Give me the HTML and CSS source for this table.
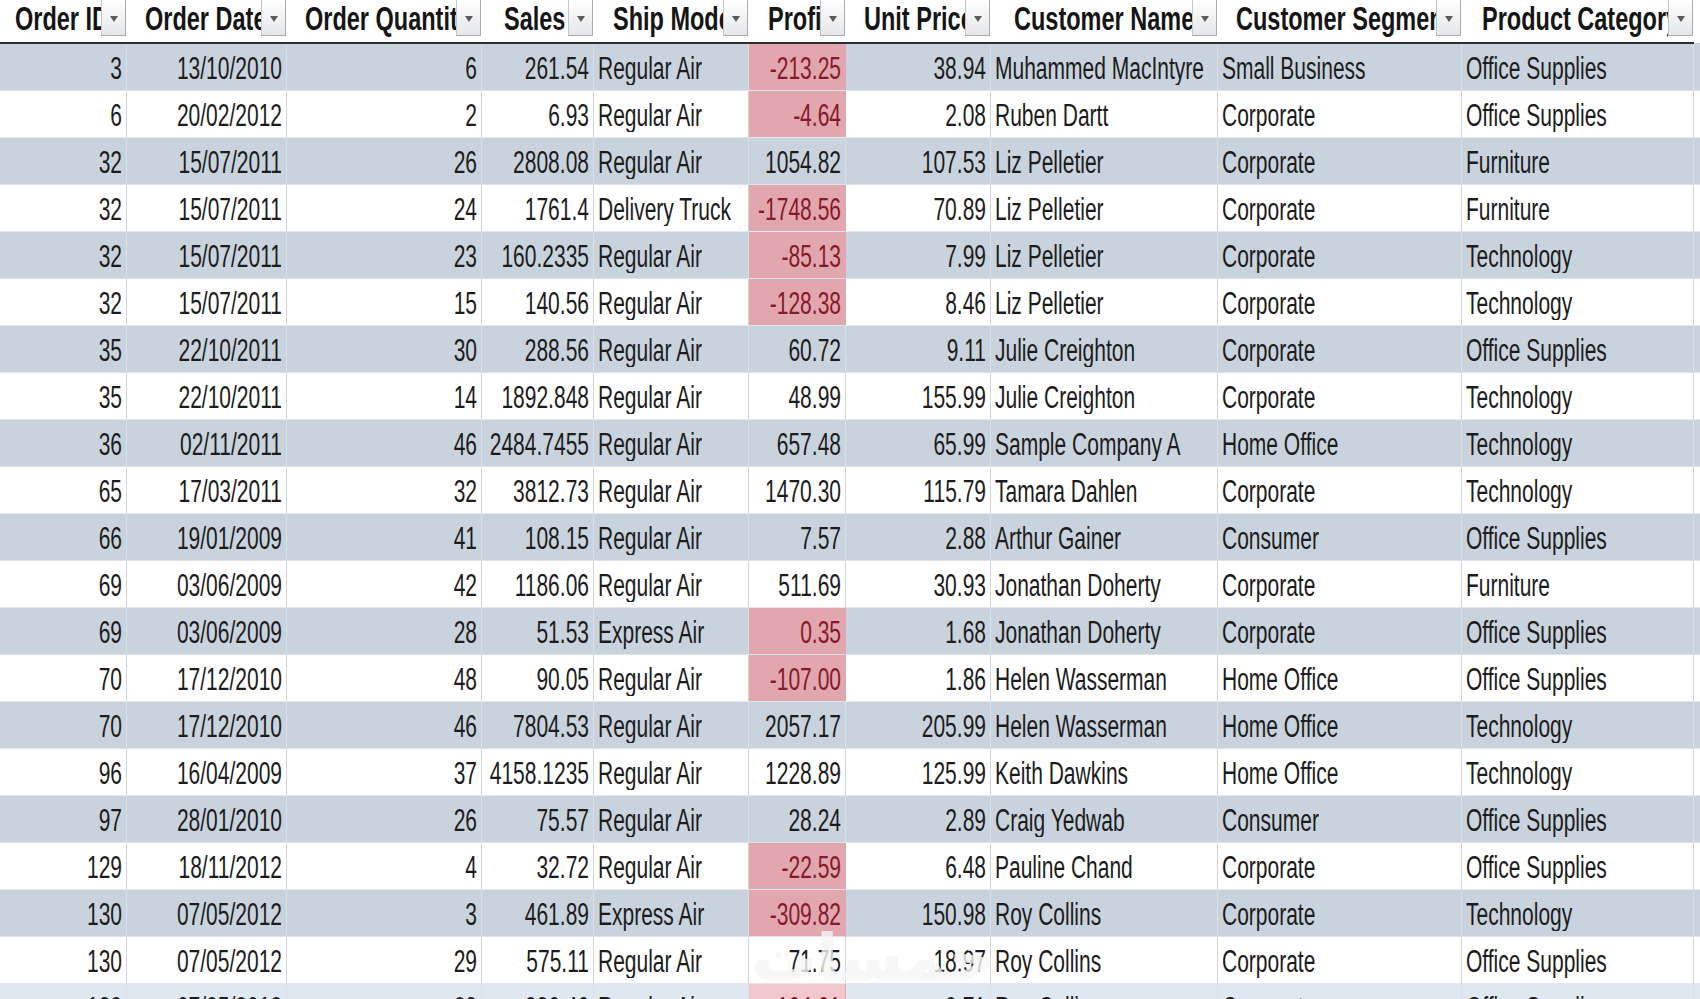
FILE: index.html
```html
<!DOCTYPE html>
<html lang="en">
<head>
<meta charset="utf-8">
<title>Orders</title>
<link rel="stylesheet" href="styles.css">
</head>
<body>
<div class="sheet">
  <div class="hd">
    <div class="hc h-id"><span class="ht"><span class="t">Order ID</span></span><span class="fb"></span></div>
    <div class="hc"><span class="ht"><span class="t">Order Date</span></span><span class="fb"></span></div>
    <div class="hc"><span class="ht"><span class="t">Order Quantity</span></span><span class="fb"></span></div>
    <div class="hc h-sales"><span class="ht"><span class="t">Sales</span></span><span class="fb"></span></div>
    <div class="hc h-ship"><span class="ht"><span class="t">Ship Mode</span></span><span class="fb"></span></div>
    <div class="hc h-ship"><span class="ht"><span class="t">Profit</span></span><span class="fb"></span></div>
    <div class="hc"><span class="ht"><span class="t">Unit Price</span></span><span class="fb"></span></div>
    <div class="hc h-name"><span class="ht"><span class="t">Customer Name</span></span><span class="fb"></span></div>
    <div class="hc"><span class="ht"><span class="t">Customer Segment</span></span><span class="fb"></span></div>
    <div class="hc h-cat"><span class="ht"><span class="t">Product Category</span></span><span class="fb"></span></div>
    <div class="hc fill"></div>
  </div>

  <div class="row band"><div class="c n"><span class="t">3</span></div><div class="c n"><span class="t">13/10/2010</span></div><div class="c n"><span class="t">6</span></div><div class="c n"><span class="t">261.54</span></div><div class="c"><span class="t">Regular Air</span></div><div class="c n neg"><span class="t">-213.25</span></div><div class="c n"><span class="t">38.94</span></div><div class="c"><span class="t">Muhammed MacIntyre</span></div><div class="c"><span class="t">Small Business</span></div><div class="c"><span class="t">Office Supplies</span></div><div class="c fill"></div></div>
  <div class="row"><div class="c n"><span class="t">6</span></div><div class="c n"><span class="t">20/02/2012</span></div><div class="c n"><span class="t">2</span></div><div class="c n"><span class="t">6.93</span></div><div class="c"><span class="t">Regular Air</span></div><div class="c n neg"><span class="t">-4.64</span></div><div class="c n"><span class="t">2.08</span></div><div class="c"><span class="t">Ruben Dartt</span></div><div class="c"><span class="t">Corporate</span></div><div class="c"><span class="t">Office Supplies</span></div><div class="c fill"></div></div>
  <div class="row band"><div class="c n"><span class="t">32</span></div><div class="c n"><span class="t">15/07/2011</span></div><div class="c n"><span class="t">26</span></div><div class="c n"><span class="t">2808.08</span></div><div class="c"><span class="t">Regular Air</span></div><div class="c n"><span class="t">1054.82</span></div><div class="c n"><span class="t">107.53</span></div><div class="c"><span class="t">Liz Pelletier</span></div><div class="c"><span class="t">Corporate</span></div><div class="c"><span class="t">Furniture</span></div><div class="c fill"></div></div>
  <div class="row"><div class="c n"><span class="t">32</span></div><div class="c n"><span class="t">15/07/2011</span></div><div class="c n"><span class="t">24</span></div><div class="c n"><span class="t">1761.4</span></div><div class="c"><span class="t">Delivery Truck</span></div><div class="c n neg"><span class="t">-1748.56</span></div><div class="c n"><span class="t">70.89</span></div><div class="c"><span class="t">Liz Pelletier</span></div><div class="c"><span class="t">Corporate</span></div><div class="c"><span class="t">Furniture</span></div><div class="c fill"></div></div>
  <div class="row band"><div class="c n"><span class="t">32</span></div><div class="c n"><span class="t">15/07/2011</span></div><div class="c n"><span class="t">23</span></div><div class="c n"><span class="t">160.2335</span></div><div class="c"><span class="t">Regular Air</span></div><div class="c n neg"><span class="t">-85.13</span></div><div class="c n"><span class="t">7.99</span></div><div class="c"><span class="t">Liz Pelletier</span></div><div class="c"><span class="t">Corporate</span></div><div class="c"><span class="t">Technology</span></div><div class="c fill"></div></div>
  <div class="row"><div class="c n"><span class="t">32</span></div><div class="c n"><span class="t">15/07/2011</span></div><div class="c n"><span class="t">15</span></div><div class="c n"><span class="t">140.56</span></div><div class="c"><span class="t">Regular Air</span></div><div class="c n neg"><span class="t">-128.38</span></div><div class="c n"><span class="t">8.46</span></div><div class="c"><span class="t">Liz Pelletier</span></div><div class="c"><span class="t">Corporate</span></div><div class="c"><span class="t">Technology</span></div><div class="c fill"></div></div>
  <div class="row band"><div class="c n"><span class="t">35</span></div><div class="c n"><span class="t">22/10/2011</span></div><div class="c n"><span class="t">30</span></div><div class="c n"><span class="t">288.56</span></div><div class="c"><span class="t">Regular Air</span></div><div class="c n"><span class="t">60.72</span></div><div class="c n"><span class="t">9.11</span></div><div class="c"><span class="t">Julie Creighton</span></div><div class="c"><span class="t">Corporate</span></div><div class="c"><span class="t">Office Supplies</span></div><div class="c fill"></div></div>
  <div class="row"><div class="c n"><span class="t">35</span></div><div class="c n"><span class="t">22/10/2011</span></div><div class="c n"><span class="t">14</span></div><div class="c n"><span class="t">1892.848</span></div><div class="c"><span class="t">Regular Air</span></div><div class="c n"><span class="t">48.99</span></div><div class="c n"><span class="t">155.99</span></div><div class="c"><span class="t">Julie Creighton</span></div><div class="c"><span class="t">Corporate</span></div><div class="c"><span class="t">Technology</span></div><div class="c fill"></div></div>
  <div class="row band"><div class="c n"><span class="t">36</span></div><div class="c n"><span class="t">02/11/2011</span></div><div class="c n"><span class="t">46</span></div><div class="c n"><span class="t">2484.7455</span></div><div class="c"><span class="t">Regular Air</span></div><div class="c n"><span class="t">657.48</span></div><div class="c n"><span class="t">65.99</span></div><div class="c"><span class="t">Sample Company A</span></div><div class="c"><span class="t">Home Office</span></div><div class="c"><span class="t">Technology</span></div><div class="c fill"></div></div>
  <div class="row"><div class="c n"><span class="t">65</span></div><div class="c n"><span class="t">17/03/2011</span></div><div class="c n"><span class="t">32</span></div><div class="c n"><span class="t">3812.73</span></div><div class="c"><span class="t">Regular Air</span></div><div class="c n"><span class="t">1470.30</span></div><div class="c n"><span class="t">115.79</span></div><div class="c"><span class="t">Tamara Dahlen</span></div><div class="c"><span class="t">Corporate</span></div><div class="c"><span class="t">Technology</span></div><div class="c fill"></div></div>
  <div class="row band"><div class="c n"><span class="t">66</span></div><div class="c n"><span class="t">19/01/2009</span></div><div class="c n"><span class="t">41</span></div><div class="c n"><span class="t">108.15</span></div><div class="c"><span class="t">Regular Air</span></div><div class="c n"><span class="t">7.57</span></div><div class="c n"><span class="t">2.88</span></div><div class="c"><span class="t">Arthur Gainer</span></div><div class="c"><span class="t">Consumer</span></div><div class="c"><span class="t">Office Supplies</span></div><div class="c fill"></div></div>
  <div class="row"><div class="c n"><span class="t">69</span></div><div class="c n"><span class="t">03/06/2009</span></div><div class="c n"><span class="t">42</span></div><div class="c n"><span class="t">1186.06</span></div><div class="c"><span class="t">Regular Air</span></div><div class="c n"><span class="t">511.69</span></div><div class="c n"><span class="t">30.93</span></div><div class="c"><span class="t">Jonathan Doherty</span></div><div class="c"><span class="t">Corporate</span></div><div class="c"><span class="t">Furniture</span></div><div class="c fill"></div></div>
  <div class="row band"><div class="c n"><span class="t">69</span></div><div class="c n"><span class="t">03/06/2009</span></div><div class="c n"><span class="t">28</span></div><div class="c n"><span class="t">51.53</span></div><div class="c"><span class="t">Express Air</span></div><div class="c n neg"><span class="t">0.35</span></div><div class="c n"><span class="t">1.68</span></div><div class="c"><span class="t">Jonathan Doherty</span></div><div class="c"><span class="t">Corporate</span></div><div class="c"><span class="t">Office Supplies</span></div><div class="c fill"></div></div>
  <div class="row"><div class="c n"><span class="t">70</span></div><div class="c n"><span class="t">17/12/2010</span></div><div class="c n"><span class="t">48</span></div><div class="c n"><span class="t">90.05</span></div><div class="c"><span class="t">Regular Air</span></div><div class="c n neg"><span class="t">-107.00</span></div><div class="c n"><span class="t">1.86</span></div><div class="c"><span class="t">Helen Wasserman</span></div><div class="c"><span class="t">Home Office</span></div><div class="c"><span class="t">Office Supplies</span></div><div class="c fill"></div></div>
  <div class="row band"><div class="c n"><span class="t">70</span></div><div class="c n"><span class="t">17/12/2010</span></div><div class="c n"><span class="t">46</span></div><div class="c n"><span class="t">7804.53</span></div><div class="c"><span class="t">Regular Air</span></div><div class="c n"><span class="t">2057.17</span></div><div class="c n"><span class="t">205.99</span></div><div class="c"><span class="t">Helen Wasserman</span></div><div class="c"><span class="t">Home Office</span></div><div class="c"><span class="t">Technology</span></div><div class="c fill"></div></div>
  <div class="row"><div class="c n"><span class="t">96</span></div><div class="c n"><span class="t">16/04/2009</span></div><div class="c n"><span class="t">37</span></div><div class="c n"><span class="t">4158.1235</span></div><div class="c"><span class="t">Regular Air</span></div><div class="c n"><span class="t">1228.89</span></div><div class="c n"><span class="t">125.99</span></div><div class="c"><span class="t">Keith Dawkins</span></div><div class="c"><span class="t">Home Office</span></div><div class="c"><span class="t">Technology</span></div><div class="c fill"></div></div>
  <div class="row band"><div class="c n"><span class="t">97</span></div><div class="c n"><span class="t">28/01/2010</span></div><div class="c n"><span class="t">26</span></div><div class="c n"><span class="t">75.57</span></div><div class="c"><span class="t">Regular Air</span></div><div class="c n"><span class="t">28.24</span></div><div class="c n"><span class="t">2.89</span></div><div class="c"><span class="t">Craig Yedwab</span></div><div class="c"><span class="t">Consumer</span></div><div class="c"><span class="t">Office Supplies</span></div><div class="c fill"></div></div>
  <div class="row"><div class="c n"><span class="t">129</span></div><div class="c n"><span class="t">18/11/2012</span></div><div class="c n"><span class="t">4</span></div><div class="c n"><span class="t">32.72</span></div><div class="c"><span class="t">Regular Air</span></div><div class="c n neg"><span class="t">-22.59</span></div><div class="c n"><span class="t">6.48</span></div><div class="c"><span class="t">Pauline Chand</span></div><div class="c"><span class="t">Corporate</span></div><div class="c"><span class="t">Office Supplies</span></div><div class="c fill"></div></div>
  <div class="row band"><div class="c n"><span class="t">130</span></div><div class="c n"><span class="t">07/05/2012</span></div><div class="c n"><span class="t">3</span></div><div class="c n"><span class="t">461.89</span></div><div class="c"><span class="t">Express Air</span></div><div class="c n neg"><span class="t">-309.82</span></div><div class="c n"><span class="t">150.98</span></div><div class="c"><span class="t">Roy Collins</span></div><div class="c"><span class="t">Corporate</span></div><div class="c"><span class="t">Technology</span></div><div class="c fill"></div></div>
  <div class="row"><div class="c n"><span class="t">130</span></div><div class="c n"><span class="t">07/05/2012</span></div><div class="c n"><span class="t">29</span></div><div class="c n"><span class="t">575.11</span></div><div class="c"><span class="t">Regular Air</span></div><div class="c n"><span class="t">71.75</span></div><div class="c n"><span class="t">18.97</span></div><div class="c"><span class="t">Roy Collins</span></div><div class="c"><span class="t">Corporate</span></div><div class="c"><span class="t">Office Supplies</span></div><div class="c fill"></div></div>
  <div class="row band fade"><div class="c n"><span class="t">130</span></div><div class="c n"><span class="t">07/05/2012</span></div><div class="c n"><span class="t">23</span></div><div class="c n"><span class="t">236.46</span></div><div class="c"><span class="t">Regular Air</span></div><div class="c n neg"><span class="t">-104.01</span></div><div class="c n"><span class="t">9.71</span></div><div class="c"><span class="t">Roy Collins</span></div><div class="c"><span class="t">Corporate</span></div><div class="c"><span class="t">Office Supplies</span></div><div class="c fill"></div></div>

  <div class="mark">خمسات</div>
</div>
</body>
</html>
```

FILE: styles.css
```css
html, body {
  margin: 0;
  padding: 0;
  background: #ffffff;
  overflow: hidden;
}

.sheet {
  position: relative;
  width: 1700px;
  height: 999px;
  overflow: hidden;
  font-family: "Liberation Sans", Arial, sans-serif;
  color: #1c1c1c;
}

.hd,
.row {
  display: grid;
  grid-template-columns: 127px 160px 195px 112px 155px 97px 145px 227px 244px 232px 1fr;
}

/* ---------- header ---------- */
.hd {
  height: 44px;
  background: #ffffff;
}

.hc {
  display: flex;
  align-items: flex-start;
  height: 44px;
  box-sizing: border-box;
  border-bottom: 2px solid #2e2e2e;
  overflow: hidden;
}

.hc.fill {
  border-bottom: 1px solid #c9c9c9;
}

.ht {
  flex: 1;
  min-width: 0;
  height: 40px;
  display: flex;
  align-items: center;
  padding-left: 18px;
  padding-bottom: 2px;
  box-sizing: border-box;
  overflow: hidden;
  white-space: nowrap;
  font-size: 23.5px;
  font-weight: bold;
  color: #151515;
}

.h-id .ht { padding-left: 15px; }
.h-sales .ht { padding-left: 22px; }
.h-ship .ht { padding-left: 19px; }
.h-name .ht { padding-left: 23px; }
.h-cat .ht { padding-left: 20px; }

.fb {
  flex: none;
  width: 25px;
  height: 37px;
  margin-top: -1px;
  margin-right: 1px;
  box-sizing: border-box;
  border: 1px solid #a8abb0;
  border-left-color: #c4c7cb;
  background: linear-gradient(#ffffff, #e4e6e9);
  display: flex;
  justify-content: center;
  align-items: flex-start;
  padding-top: 16px;
}

.fb::after {
  content: "";
  width: 0;
  height: 0;
  border-left: 4.5px solid transparent;
  border-right: 4.5px solid transparent;
  border-top: 6px solid #5a5a5a;
}

/* ---------- body rows ---------- */
.row {
  height: 47px;
  background: #ffffff;
}

.row.band {
  background: #c9d3de;
}

.row.fade {
  background: #dfe7f1;
}

.c {
  display: flex;
  align-items: center;
  justify-content: flex-start;
  box-sizing: border-box;
  height: 47px;
  padding: 3px 4px 0 4px;
  border-right: 1px solid #d2d5d9;
  border-bottom: 1px solid #e3e7ec;
  white-space: nowrap;
  font-size: 21px;
  overflow: hidden;
}

.band .c {
  border-right-color: #d9e0e8;
  border-bottom-color: #dde3ea;
}

.c.n {
  justify-content: flex-end;
}

.c.neg {
  background: #e2a6ae;
  color: #86192a;
  border-right-color: #e2a6ae;
}

.fade .c.neg {
  background: #f2c6cd;
}

.c.fill {
  border-right: none;
}

.t {
  display: inline-block;
  transform: scaleY(1.45);
}

/* ---------- watermark ---------- */
.mark {
  position: absolute;
  left: 752px;
  top: 926px;
  font-family: "DejaVu Sans", sans-serif;
  font-size: 64px;
  font-weight: bold;
  line-height: 1;
  color: rgba(255, 255, 255, 0.72);
  text-shadow: 0 0 1px rgba(160, 160, 160, 0.3);
  pointer-events: none;
}
```
